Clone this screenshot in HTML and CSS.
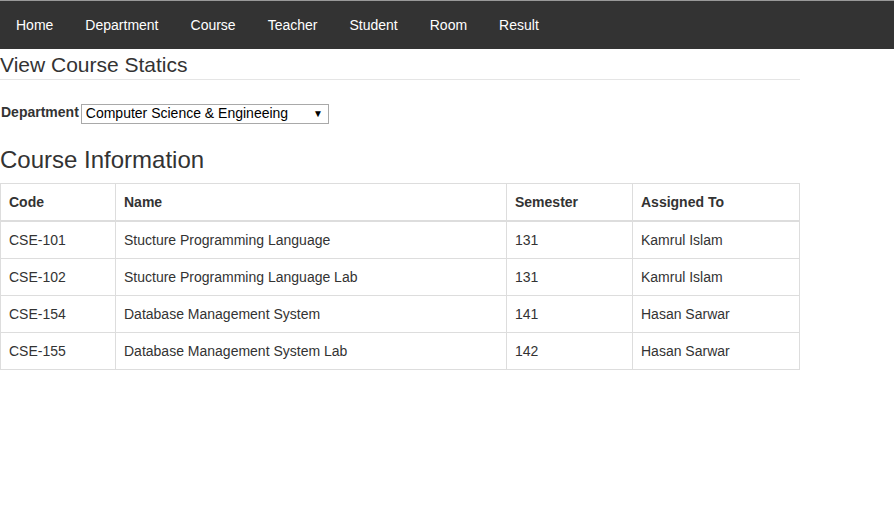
FILE: index.html
```html
<!DOCTYPE html>
<html>
<head>
<meta charset="utf-8">
<link rel="stylesheet" href="styles.css">
</head>
<body>
<nav class="navbar">
  <a href="#">Home</a>
  <a href="#">Department</a>
  <a href="#">Course</a>
  <a href="#">Teacher</a>
  <a href="#">Student</a>
  <a href="#">Room</a>
  <a href="#">Result</a>
</nav>
<main class="content">
  <h2 class="page-title">View Course Statics</h2>
  <div class="form-row">
    <label class="label">Department</label>
    <div class="select">
      <span>Computer Science &amp; Engineeing</span>
      <span class="arrow">▼</span>
    </div>
  </div>
  <h3 class="section-title">Course Information</h3>
  <table class="table">
    <thead>
      <tr><th class="c1">Code</th><th class="c2">Name</th><th class="c3">Semester</th><th class="c4">Assigned To</th></tr>
    </thead>
    <tbody>
      <tr><td>CSE-101</td><td>Stucture Programming Language</td><td>131</td><td>Kamrul Islam</td></tr>
      <tr><td>CSE-102</td><td>Stucture Programming Language Lab</td><td>131</td><td>Kamrul Islam</td></tr>
      <tr><td>CSE-154</td><td>Database Management System</td><td>141</td><td>Hasan Sarwar</td></tr>
      <tr><td>CSE-155</td><td>Database Management System Lab</td><td>142</td><td>Hasan Sarwar</td></tr>
    </tbody>
  </table>
</main>
</body>
</html>
```
FILE: styles.css
```css
html, body { margin: 0; padding: 0; background: #fff; }
body {
  font-family: "Liberation Sans", Arial, sans-serif;
  font-size: 14px;
  line-height: 1.42857;
  color: #333;
}
.navbar {
  display: flex;
  height: 49px;
  align-items: center;
  background: #333;
  border-top: 1px solid #999;
  box-sizing: border-box;
}
.navbar a {
  color: #fff;
  text-decoration: none;
  padding: 0 16px;
  font-size: 14px;
  line-height: 20px;
}
.content { width: 800px; }
.page-title {
  margin: 3px 0 0 0;
  font-size: 21px;
  font-weight: normal;
  line-height: 26px;
  padding-bottom: 1px;
  border-bottom: 1px solid #e5e5e5;
}
.form-row {
  display: flex;
  align-items: flex-start;
  margin-top: 22px;
  padding-left: 1px;
}
.label { font-weight: bold; line-height: 20px; margin-right: 2px; }
.select {
  width: 248px;
  height: 20px;
  box-sizing: border-box;
  border: 1px solid #a9a9a9;
  display: flex;
  justify-content: space-between;
  align-items: center;
  padding: 0 5px 0 4px;
  color: #000;
  font-size: 14px;
  margin-top: 2px;
}
.arrow { font-size: 10px; }
.section-title {
  margin: 23px 0 10px 0;
  font-size: 24px;
  font-weight: normal;
  line-height: 26px;
}
.table {
  border-collapse: collapse;
  width: 800px;
}
.table th, .table td {
  border: 1px solid #ddd;
  padding: 8px;
  line-height: 20px;
  text-align: left;
  vertical-align: top;
}
.table th { font-weight: bold; border-bottom: 2px solid #ddd; }
.c1 { width: 98px; }
.c2 { width: 374px; }
.c3 { width: 109px; }
```
